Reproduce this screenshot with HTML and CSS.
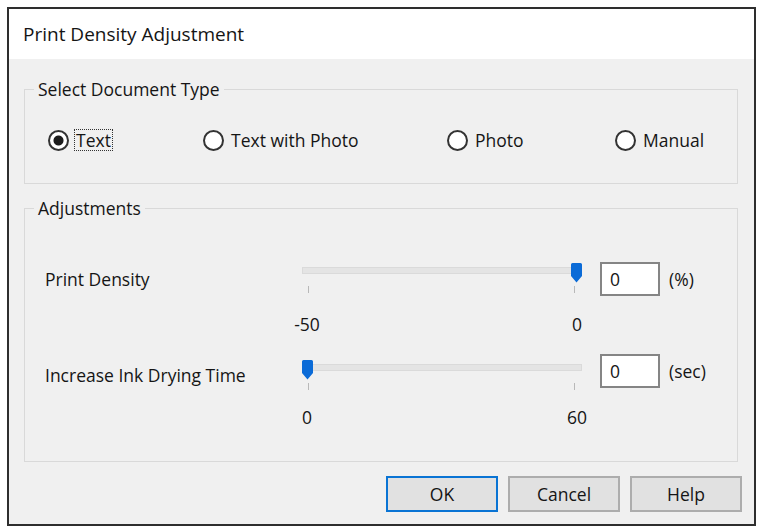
FILE: index.html
```html
<!DOCTYPE html>
<html lang="en">
<head>
    <meta charset="UTF-8">
    <meta name="viewport" content="width=device-width, initial-scale=1.0">
    <title>Print Density Adjustment</title>
    <link rel="stylesheet" href="styles.css">
</head>
<body>
    <div class="window">
        <div class="titlebar">Print Density Adjustment</div>

        <div class="dialog-body">
            <fieldset class="group group-doctype">
                <legend>Select Document Type</legend>
                <div class="radio-row">
                    <label class="radio-option">
                        <input type="radio" name="doctype" value="text" checked>
                        <span class="radio-text focused">Text</span>
                    </label>
                    <label class="radio-option">
                        <input type="radio" name="doctype" value="text-photo">
                        <span class="radio-text">Text with Photo</span>
                    </label>
                    <label class="radio-option">
                        <input type="radio" name="doctype" value="photo">
                        <span class="radio-text">Photo</span>
                    </label>
                    <label class="radio-option">
                        <input type="radio" name="doctype" value="manual">
                        <span class="radio-text">Manual</span>
                    </label>
                </div>
            </fieldset>

            <fieldset class="group group-adjust">
                <legend>Adjustments</legend>

                <div class="adjust-row row-density">
                    <div class="row-label">Print Density</div>
                    <div class="slider">
                        <div class="track-area">
                            <div class="track"></div>
                            <svg class="thumb thumb-max" width="11" height="20" viewBox="0 0 11 20">
                                <path d="M1.5 0H9.5A1.5 1.5 0 0 1 11 1.5V13L5.5 19.5L0 13V1.5A1.5 1.5 0 0 1 1.5 0Z" fill="#0b6bd7"/>
                            </svg>
                        </div>
                        <div class="ticks"><span class="tick"></span><span class="tick"></span></div>
                        <div class="scale"><span>-50</span><span>0</span></div>
                    </div>
                    <input class="value" type="text" value="0">
                    <div class="unit">(%)</div>
                </div>

                <div class="adjust-row row-drying">
                    <div class="row-label">Increase Ink Drying Time</div>
                    <div class="slider">
                        <div class="track-area">
                            <div class="track"></div>
                            <svg class="thumb thumb-min" width="11" height="20" viewBox="0 0 11 20">
                                <path d="M1.5 0H9.5A1.5 1.5 0 0 1 11 1.5V13L5.5 19.5L0 13V1.5A1.5 1.5 0 0 1 1.5 0Z" fill="#0b6bd7"/>
                            </svg>
                        </div>
                        <div class="ticks"><span class="tick"></span><span class="tick"></span></div>
                        <div class="scale"><span>0</span><span>60</span></div>
                    </div>
                    <input class="value" type="text" value="0">
                    <div class="unit">(sec)</div>
                </div>
            </fieldset>

            <div class="buttons">
                <button type="button" class="btn btn-default">OK</button>
                <button type="button" class="btn">Cancel</button>
                <button type="button" class="btn">Help</button>
            </div>
        </div>
    </div>
</body>
</html>
```

FILE: styles.css
```css
body {
    margin: 0;
    padding: 7px;
    background-color: #ffffff;
    font-family: 'Open Sans', 'Noto Sans', sans-serif;
    font-size: 17.5px;
    font-weight: 500;
    color: #151515;
}

.window {
    width: 745px;
    border: 2px solid #2e2e2e;
    background-color: #f0f0f0;
}

.titlebar {
    height: 50px;
    line-height: 50px;
    padding-left: 14px;
    font-size: 19px;
    background-color: #ffffff;
}

.dialog-body {
    padding: 19px 12px 12px 15px;
}

.group {
    margin: 0 4px 0 0;
    padding: 0;
    border: 1px solid #d9d9d9;
}

.group legend {
    margin-left: 9px;
    padding: 0 4px;
    line-height: 22px;
}

.group-doctype {
    padding: 29px 0 32px 0;
}

.group-adjust {
    margin-top: 13px;
    padding: 43px 0 34px 0;
}

/* radio buttons */
.radio-row {
    display: grid;
    grid-template-columns: 155px 244px 168px auto;
    padding-left: 23px;
    line-height: 24px;
}

.radio-option {
    display: flex;
    align-items: center;
    gap: 5px;
}

.radio-option input {
    appearance: none;
    -webkit-appearance: none;
    width: 21px;
    height: 21px;
    margin: 0;
    border: 2px solid #333333;
    border-radius: 50%;
    background-color: #ffffff;
}

.radio-option input:checked {
    background: radial-gradient(circle, #1c1c1c 0 4.5px, #ffffff 5.5px);
}

.radio-text {
    padding: 0 1px;
    border: 1px solid transparent;
    line-height: 20px;
}

.radio-text.focused {
    border: 1px dotted #333333;
}

/* slider rows */
.adjust-row {
    display: flex;
    align-items: flex-start;
    padding-left: 20px;
}

.row-drying {
    margin-top: 20px;
}

.row-label {
    width: 257px;
    line-height: 34px;
}

.row-drying .row-label {
    margin-top: 4px;
}

.slider {
    width: 280px;
    margin-top: 1px;
}

.row-drying .slider {
    margin-top: 6px;
}

.track-area {
    position: relative;
    height: 20px;
}

.track {
    position: relative;
    top: 4px;
    height: 5px;
    background-color: #e4e4e4;
    border: 1px solid #dadada;
}

.thumb {
    position: absolute;
    top: 0;
}

.thumb-min {
    left: 0;
}

.thumb-max {
    right: 0;
}

.ticks {
    display: flex;
    justify-content: space-between;
    height: 7px;
    margin-top: 3px;
    padding: 0 7px 0 6px;
}

.tick {
    width: 1px;
    background-color: #b8b8b8;
}

.scale {
    display: flex;
    justify-content: space-between;
    margin: 21px -10px 0 -10px;
    line-height: 20px;
}

.row-drying .scale {
    margin-top: 17px;
}

.scale span {
    width: 30px;
    text-align: center;
}

.value {
    box-sizing: border-box;
    width: 60px;
    height: 34px;
    margin: 0 0 0 18px;
    padding: 0 8px;
    border: 2px solid #858585;
    background-color: #ffffff;
    font-family: inherit;
    font-size: 17.5px;
    font-weight: 500;
    color: #151515;
}

.unit {
    margin-left: 9px;
    line-height: 34px;
}

/* buttons */
.buttons {
    display: flex;
    justify-content: flex-end;
    gap: 10px;
    margin-top: 14px;
}

.btn {
    width: 112px;
    height: 36px;
    border: 2px solid #adadad;
    background-color: #e1e1e1;
    font-family: inherit;
    font-size: 17.5px;
    font-weight: 500;
    color: #151515;
}

.btn-default {
    border-color: #0a74d4;
}
```
